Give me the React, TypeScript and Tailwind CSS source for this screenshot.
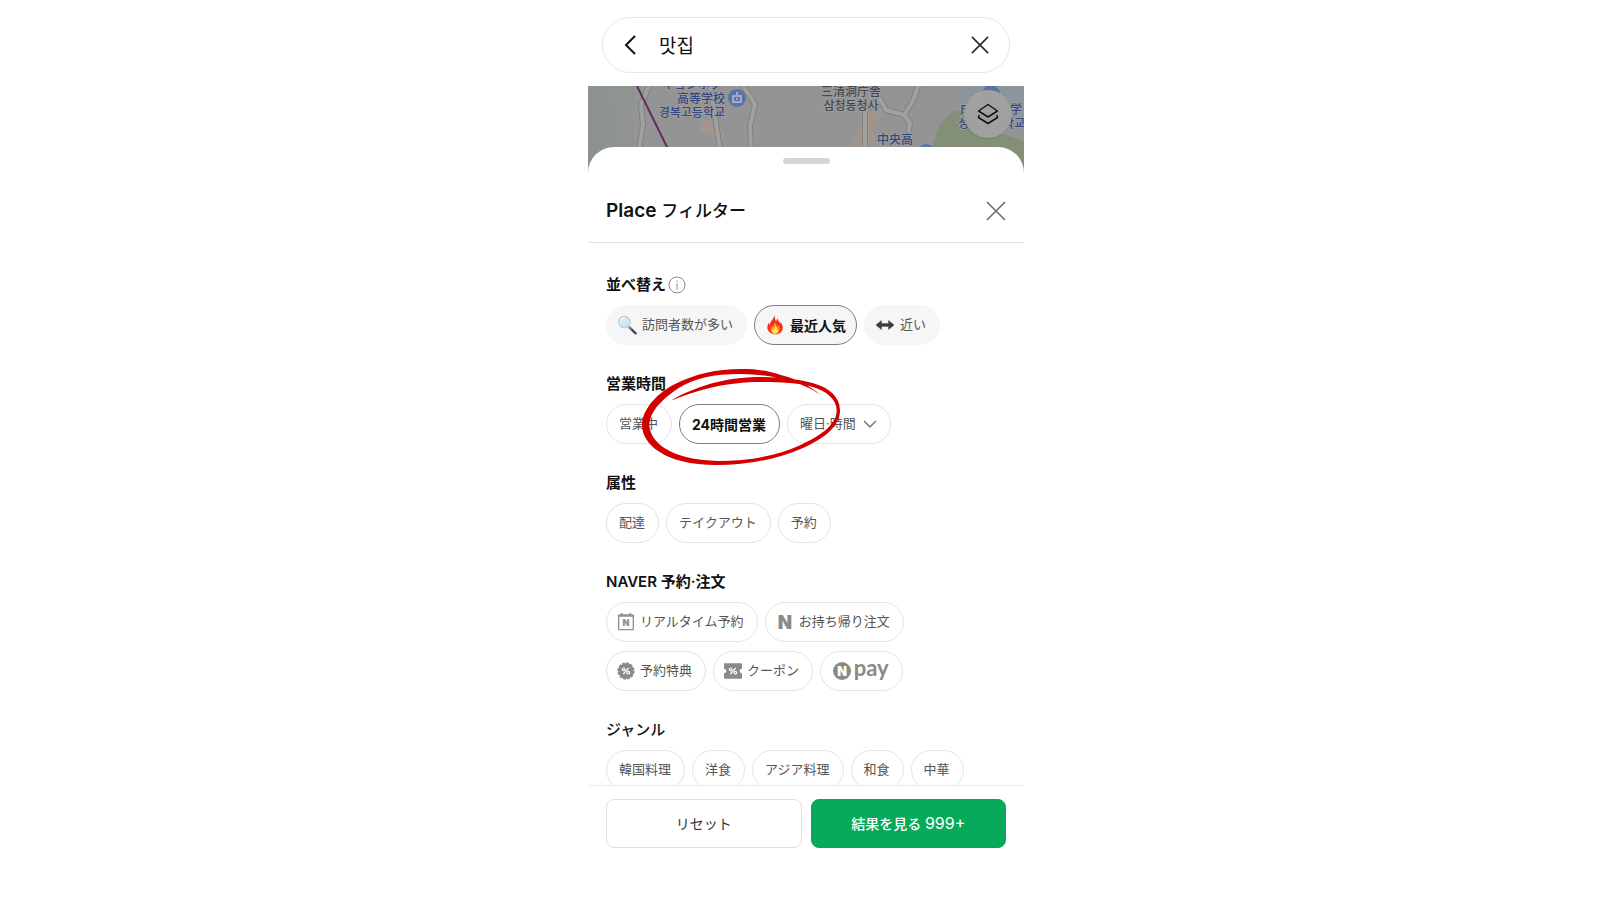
import type { ReactNode } from "react";

type IconProps = { className?: string };

const CloseIcon = ({ className }: IconProps) => (
  <svg viewBox="0 0 20 20" aria-hidden className={className} fill="none" stroke="currentColor">
    <path d="M1 1 19 19M19 1 1 19" />
  </svg>
);

const SearchEmoji = () => (
  <svg viewBox="0 0 60 60" aria-hidden className="size-5">
    <path d="M38 38 56 55" stroke="#3b4a57" strokeWidth="7" strokeLinecap="round" />
    <path d="M35 35 43 43" stroke="#8d989f" strokeWidth="4" />
    <circle cx="22" cy="21" r="17" fill="#d3e6f4" stroke="#c3ccd3" strokeWidth="4" />
    <path d="M11 20a12 12 0 0 1 12-11" stroke="#eef8ff" strokeWidth="4" fill="none" strokeLinecap="round" />
  </svg>
);

const FireEmoji = () => (
  <svg viewBox="0 0 60 60" aria-hidden className="size-5">
    <path
      d="M29 1c3 8-1 13 5 17 1-3 1-5 4-8 0 8 5 10 8 16 1-2 1-4 0-6 5 6 8 13 7 20-1 11-9 18-22 18S8 50 7 39c0-7 2-12 5-16 0 3 1 5 3 6 0-12 12-16 14-28Z"
      fill="#f5301c"
    />
    <path d="M31 20c0 7 4 10 7 14 1-1 2-2 2-4 4 6 5 11 4 16-2 7-7 10-14 10-8 0-14-5-14-13 0-5 2-8 4-11 1 3 2 4 4 4 0-7 6-9 7-16Z" fill="#ff8a17" />
    <path d="M31 31c1 6 8 9 8 17 0 5-4 8-9 8s-9-3-9-8c0-4 2-6 3-9 1 2 2 3 4 3 0-4 2-6 3-11Z" fill="#ffe65a" />
  </svg>
);

const ArrowsEmoji = () => (
  <svg viewBox="0 0 60 60" aria-hidden className="size-5">
    <path d="M3 30 19 17v9h22v-9l16 13-16 13v-9H19v9Z" fill="#3e3e3e" stroke="#3e3e3e" strokeWidth="2" strokeLinejoin="round" />
  </svg>
);

const CalendarIcon = () => (
  <svg viewBox="0 0 60 60" aria-hidden className="size-5 font-['Inter',sans-serif]">
    <rect x="8" y="9" width="44" height="44" rx="2" fill="none" stroke="#8f8f8f" strokeWidth="4" />
    <path d="M8 12h44M17 3v9M43 3v9" fill="none" stroke="#8f8f8f" strokeWidth="5" />
    <text x="30" y="43" textAnchor="middle" fontSize="27" fontWeight="900" fill="#8f8f8f">N</text>
  </svg>
);

const NaverIcon = () => (
  <svg viewBox="0 0 60 60" aria-hidden className="size-5 overflow-visible font-['Inter',sans-serif]">
    <text x="30" y="50" textAnchor="middle" fontSize="56" fontWeight="900" fill="#8a8a8a">N</text>
  </svg>
);

const PercentMark = () => (
  <g fill="none" stroke="#fff" strokeWidth="3.500">
    <path d="M22 39 38 21" />
    <circle cx="23" cy="25" r="4" />
    <circle cx="37" cy="35" r="4" />
  </g>
);

const BenefitIcon = () => (
  <svg viewBox="0 0 60 60" aria-hidden className="size-5">
    <circle cx="30" cy="30" r="23" fill="#8a8a8a" />
    <circle cx="30" cy="30" r="23" fill="none" stroke="#8a8a8a" strokeWidth="6" strokeLinejoin="round" strokeDasharray="8 4.040" />
    <PercentMark />
  </svg>
);

const CouponIcon = () => (
  <svg viewBox="0 0 60 60" aria-hidden className="size-5">
    <path d="M5 7h50a2 2 0 0 1 2 2v14a7 7 0 0 0 0 14v14a2 2 0 0 1-2 2H5a2 2 0 0 1-2-2V37a7 7 0 0 0 0-14V9a2 2 0 0 1 2-2Z" fill="#8a8a8a" />
    <PercentMark />
  </svg>
);

const NPayLogo = () => (
  <svg viewBox="0 0 168 60" role="img" aria-label="N pay" className="h-5 w-14 overflow-visible">
    <circle cx="27" cy="30" r="27" fill="#8a8a8a" />
    <text x="27" y="44" textAnchor="middle" fontSize="38" fontWeight="900" fill="#fff" className="font-['Inter',sans-serif]">N</text>
    <text x="62" y="46" fontSize="66" fontWeight="700" fill="#8a8a8a" className="font-['Lato',sans-serif]">pay</text>
  </svg>
);

const MapView = () => (
  <div className="relative h-[90px] shrink-0 overflow-hidden bg-[#949494]">
    <svg viewBox="0 0 436 90" preserveAspectRatio="xMidYMin slice" aria-hidden className="h-full w-full font-['Noto_Sans_CJK_JP',sans-serif]">
      <path d="M0 0h22l-5 18 12 12-3 22-10 8-2 30H0Z" fill="#8b928f" />
      <path d="M22 0h26l-4 30 4 60H14l2-30 10-8 3-22-12-12Z" fill="#909491" />
      <path d="M111 46 117 34l13 2 8 17Z" fill="#a4968d" />
      <path d="M262 61 272 45l4-20 18-3 2 8-12 8 4 23Z" fill="#a1958c" />
      <path d="M367 0h69v40l-56-18-12-12Z" fill="#8c959c" />
      <path d="M344 61 352 38l13-13 22 2 24 20 25 8v35H344Z" fill="#839077" />
      {/* roads */}
      <g fill="none" strokeLinejoin="round">
        <g stroke="#818181" strokeWidth="6">
          <path d="M61 0 53 19l2 20-4 24" />
          <path d="M122 0l5 30 5 33" />
          <path d="M155 0l12 18-5 22 1 23" />
          <path d="M277 63V25l15-12 6 11 18 5 9-14 5-15M316 29l6 8-2 13" />
        </g>
        <g stroke="#a0a0a0" strokeWidth="4">
          <path d="M61 0 53 19l2 20-4 24" />
          <path d="M122 0l5 30 5 33" />
          <path d="M155 0l12 18-5 22 1 23" />
          <path d="M277 63V25l15-12 6 11 18 5 9-14 5-15M316 29l6 8-2 13" />
        </g>
        <path d="M49 0 79 61" stroke="#622d62" strokeWidth="2" />
      </g>
      {/* place names */}
      <g fontSize="12" fontWeight="500" fill="#34487f" stroke="#9c9c9c" strokeWidth="2" paintOrder="stroke">
        <text x="134" y="3" textAnchor="end">キョンボク</text>
        <text x="137" y="17" textAnchor="end">高等学校</text>
        <text x="137" y="31" textAnchor="end">경복고등학교</text>
        <text x="307" y="58" textAnchor="middle">中央高</text>
        <text x="372" y="28">成均</text>
        <text x="434" y="28" textAnchor="end">学</text>
        <text x="370" y="42">성균</text>
        <text x="437" y="42" textAnchor="end">학교</text>
      </g>
      <g fontSize="12" fontWeight="500" fill="#434650" stroke="#9c9c9c" strokeWidth="2" paintOrder="stroke" textAnchor="middle">
        <text x="263" y="10">三清洞庁舎</text>
        <text x="263" y="24">삼청동청사</text>
      </g>
      <g fill="#5874aa">
        <circle cx="149" cy="12" r="9" />
        <circle cx="403" cy="8" r="9" />
        <circle cx="338" cy="67" r="9" />
      </g>
      <path d="M149 6v3m-4 1h8v6h-8Z" fill="none" stroke="#b9bdc6" strokeWidth="1.500" />
      <circle cx="149" cy="13" r="1" fill="#b9bdc6" />
    </svg>
    <button
      type="button"
      aria-label="地図レイヤー"
      className="absolute top-1 right-3 flex size-12 items-center justify-center rounded-full bg-[#a0a0a0] shadow-sm"
    >
      <svg viewBox="0 0 24 24" aria-hidden className="size-6" fill="none" stroke="#111" strokeWidth="1.500" strokeLinejoin="round" strokeLinecap="round">
        <path d="M12 2.500 21.500 9 12 15 2.500 9ZM3 13.500 2.500 15.500 12 21.500l9.500-6-.500-2" />
      </svg>
    </button>
  </div>
);

// Hand-drawn highlight around the selected opening hours
const Scribble = () => (
  <svg viewBox="0 0 900 360" aria-hidden className="pointer-events-none absolute -top-3.5 -left-1.5 h-[120px] w-[300px]">
    <path
      d="M662 105C625 75 590 58 545 46C500 31 470 27 425 27C350 27 285 42 225 72C170 100 126 150 126 195C126 250 190 315 350 315C440 315 530 298 600 268C680 234 721 195 720 150C719 112 690 84 640 70C600 58 540 50 470 51C370 53 280 82 212 122C290 91 370 69 460 66C530 65 590 68 630 79C680 92 709 118 710 150C711 188 675 222 595 258C525 289 440 303 355 303C210 301 148 245 148 193C150 155 185 118 235 85C285 52 350 41 425 42C500 43 600 60 662 105Z"
      fill="#d40000"
    />
  </svg>
);

type ChipProps = {
  children: ReactNode;
  icon?: ReactNode;
  selected?: boolean;
  filled?: boolean;
};

const Chip = ({ children, icon, selected, filled }: ChipProps) => {
  const border = selected ? "border-[#7d7d7d]" : filled ? "border-[#f6f6f6]" : "border-[#e4e4e4]";
  const text = selected ? "text-[14px] font-bold text-[#111]" : "text-[13px] text-[#555]";
  let pad = "gap-[7px] pl-3 pr-[13px]";
  if (icon) {
    pad = filled ? "gap-[5px] pl-2.5 pr-[13px]" : "gap-1 pl-[9px] pr-[13px]";
    if (selected) pad = "gap-[5px] pl-2.5 pr-2.5";
  }
  return (
    <button
      type="button"
      aria-pressed={!!selected}
      className={`flex h-10 items-center rounded-full border whitespace-nowrap ${pad} ${border} ${text} ${filled ? "bg-[#f6f6f6]" : "bg-white"}`}
    >
      {icon}
      {children}
    </button>
  );
};

type SectionProps = {
  title: ReactNode;
  info?: boolean;
  children: ReactNode;
  overlay?: ReactNode;
};

const Section = ({ title, info, children, overlay }: SectionProps) => (
  <section className="relative">
    <div className="mb-2.5 flex h-5 items-center gap-0.5">
      <h2 className="text-[15px] leading-5 font-semibold text-[#111]">{title}</h2>
      {info && (
        <button type="button" aria-label="並べ替えについて">
          <svg viewBox="0 0 18 18" aria-hidden className="size-[18px]" fill="none" stroke="#8c8c8c">
            <circle cx="9" cy="9" r="8" />
            <path d="M9 7.500v6M9 4.500v1.500" />
          </svg>
        </button>
      )}
    </div>
    <div className="flex flex-wrap gap-x-[7px] gap-y-[9px]">{children}</div>
    {overlay}
  </section>
);

const App = () => {
  return (
    <div className="h-screen bg-white pl-3 font-['Inter','Noto_Sans_CJK_JP','Noto_Sans_CJK_KR',sans-serif]">
      <main className="mx-auto flex h-full max-w-[436px] flex-col">
        {/* Search bar */}
        <form className="mx-3.5 mt-[17px] mb-[13px] flex h-14 shrink-0 items-center rounded-full border border-[#e6e6e6] pr-5 pl-[21px]">
          <button type="button" aria-label="戻る">
            <svg viewBox="0 0 12 20" aria-hidden className="h-5 w-3" fill="none" stroke="#111" strokeWidth="2">
              <path d="M11 1 2 10l9 9" />
            </svg>
          </button>
          <input
            type="text"
            aria-label="検索"
            defaultValue="맛집"
            className="ml-[23px] min-w-0 flex-1 font-['Noto_Sans_CJK_KR',sans-serif] text-[19px] text-[#111] outline-none"
          />
          <button type="button" aria-label="クリア">
            <CloseIcon className="size-[18px] stroke-2 text-[#333]" />
          </button>
        </form>

        <MapView />

        {/* Filter sheet */}
        <div className="relative -mt-[29px] flex min-h-0 flex-1 flex-col rounded-t-[26px] bg-white">
          <div className="mx-auto mt-[11px] h-1.5 w-[47px] shrink-0 rounded-full bg-[#d6d6d6]" />
          <header className="flex shrink-0 items-center justify-between border-b border-[#e2e2e2] px-[18px] pt-[33px] pb-[17px]">
            <h1 className="text-[19px] leading-7 font-semibold text-[#111]">
              Place <span className="text-[17px] font-medium">フィルター</span>
            </h1>
            <button type="button" aria-label="閉じる">
              <CloseIcon className="size-5 stroke-[1.5] text-[#666]" />
            </button>
          </header>

          <div className="flex min-h-0 flex-1 flex-col gap-[29px] overflow-y-auto px-[18px] pt-8 pb-7 [scrollbar-width:none]">
            <Section title="並べ替え" info>
              <Chip filled icon={<SearchEmoji />}>訪問者数が多い</Chip>
              <Chip filled selected icon={<FireEmoji />}>最近人気</Chip>
              <Chip filled icon={<ArrowsEmoji />}>近い</Chip>
            </Section>

            <Section title="営業時間" overlay={<Scribble />}>
              <Chip>営業中</Chip>
              <Chip selected>24時間営業</Chip>
              <Chip>
                曜日·時間
                <svg viewBox="0 0 14 14" aria-hidden className="size-3.5" fill="none" stroke="#777" strokeWidth="1.500">
                  <path d="m1 4 6 6 6-6" />
                </svg>
              </Chip>
            </Section>

            <Section title="属性">
              <Chip>配達</Chip>
              <Chip>テイクアウト</Chip>
              <Chip>予約</Chip>
            </Section>

            <Section title="NAVER 予約·注文">
              <Chip icon={<CalendarIcon />}>リアルタイム予約</Chip>
              <Chip icon={<NaverIcon />}>お持ち帰り注文</Chip>
              <Chip icon={<BenefitIcon />}>予約特典</Chip>
              <Chip icon={<CouponIcon />}>クーポン</Chip>
              <Chip>
                <NPayLogo />
              </Chip>
            </Section>

            <Section title={<span className="font-medium">ジャンル</span>}>
              <Chip>韓国料理</Chip>
              <Chip>洋食</Chip>
              <Chip>アジア料理</Chip>
              <Chip>和食</Chip>
              <Chip>中華</Chip>
            </Section>
          </div>

          <footer className="flex shrink-0 gap-[9px] border-t border-[#ececec] px-[18px] pt-[13px] pb-[52px]">
            <button type="button" className="h-[49px] flex-1 rounded-lg border border-[#dedede] text-[14px] text-[#333]">
              リセット
            </button>
            <button type="button" className="h-[49px] flex-1 rounded-lg border border-[#06aa5a] bg-[#06aa5a] text-[14px] font-medium text-white">
              結果を見る <span className="text-[16px] leading-4 font-normal">999+</span>
            </button>
          </footer>
        </div>
      </main>
    </div>
  );
};

export default App;
